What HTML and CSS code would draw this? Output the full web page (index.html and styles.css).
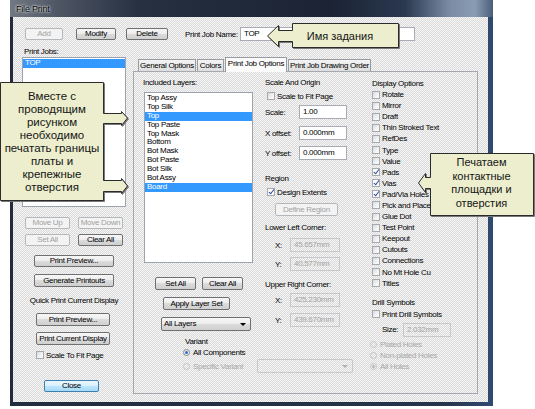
FILE: index.html
```html
<!DOCTYPE html>
<html lang="ru">
<head>
    <meta charset="UTF-8">
    <meta name="viewport" content="width=device-width, initial-scale=1.0">
    <title>File Print</title>
    <link rel="stylesheet" href="styles.css">
</head>
<body>
    <div class="window">
        <div class="titlebar">File Print</div>
        <div class="dialog">
            <div class="toolbar">
                <div class="btn off w-add">Add</div>
                <div class="btn w-modify">Modify</div>
                <div class="btn w-delete">Delete</div>
                <span class="job-label">Print Job Name:</span>
                <div class="field job-name">TOP</div>
            </div>
            <div class="main">
                <div class="jobs">
                    <div class="lbl jobs-title">Print Jobs:</div>
                    <div class="listbox jobs-list">
                        <div class="item sel">TOP</div>
                    </div>
                    <div class="pair move">
                        <div class="btn off">Move Up</div>
                        <div class="btn off">Move Down</div>
                    </div>
                    <div class="pair setall">
                        <div class="btn off">Set All</div>
                        <div class="btn">Clear All</div>
                    </div>
                    <div class="btn preview">Print Preview...</div>
                    <div class="btn generate">Generate Printouts</div>
                    <div class="lbl quick">Quick Print Current Display</div>
                    <div class="btn quick-btn first">Print Preview...</div>
                    <div class="btn quick-btn second">Print Current Display</div>
                    <div class="check fit"><span class="box"></span>Scale To Fit Page</div>
                    <div class="btn close">Close</div>
                </div>

                <div class="tabs-area">
                    <div class="tabs">
                        <div class="tab t-general">General Options</div>
                        <div class="tab t-colors">Colors</div>
                        <div class="tab active t-options">Print Job Options</div>
                        <div class="tab t-order">Print Job Drawing Order</div>
                    </div>
                    <div class="panel">
                        <!-- слои -->
                        <div class="col layers">
                            <div class="lbl">Included Layers:</div>
                            <div class="listbox layer-list">
                                <div class="item">Top Assy</div>
                                <div class="item">Top Silk</div>
                                <div class="item sel">Top</div>
                                <div class="item">Top Paste</div>
                                <div class="item">Top Mask</div>
                                <div class="item">Bottom</div>
                                <div class="item">Bot Mask</div>
                                <div class="item">Bot Paste</div>
                                <div class="item">Bot Silk</div>
                                <div class="item">Bot Assy</div>
                                <div class="item sel">Board</div>
                            </div>
                            <div class="pair layer-btns">
                                <div class="btn">Set All</div>
                                <div class="btn">Clear All</div>
                            </div>
                            <div class="btn apply">Apply Layer Set</div>
                            <div class="combo layer-combo">All Layers<span class="arrow"></span></div>
                            <div class="lbl variant-title">Variant</div>
                            <div class="check radio-row variant-all"><span class="radio on"></span>All Components</div>
                            <div class="check radio-row variant-spec off">
                                <span class="radio"></span><span class="spec-text">Specific Variant</span>
                                <div class="combo off spec-combo"><span class="arrow"></span></div>
                            </div>
                        </div>

                        <!-- масштаб и начало координат -->
                        <div class="col origin">
                            <div class="lbl">Scale And Origin</div>
                            <div class="check shift fit-page"><span class="box"></span>Scale to Fit Page</div>
                            <div class="row scale"><span class="name">Scale:</span><div class="field wide">1.00</div></div>
                            <div class="row xoff"><span class="name">X offset:</span><div class="field wide">0.000mm</div></div>
                            <div class="row yoff"><span class="name">Y offset:</span><div class="field wide">0.000mm</div></div>
                            <div class="lbl region">Region</div>
                            <div class="check shift extents"><span class="box on"></span>Design Extents</div>
                            <div class="btn off define">Define Region</div>
                            <div class="lbl lower">Lower Left Corner:</div>
                            <div class="row corner c1"><span class="axis">X:</span><div class="field off">45.657mm</div></div>
                            <div class="row corner c2"><span class="axis">Y:</span><div class="field off">40.577mm</div></div>
                            <div class="lbl upper">Upper Right Corner:</div>
                            <div class="row corner c3"><span class="axis">X:</span><div class="field off">425.230mm</div></div>
                            <div class="row corner c4"><span class="axis">Y:</span><div class="field off">439.670mm</div></div>
                        </div>

                        <!-- параметры отображения -->
                        <div class="col display">
                            <div class="lbl display-title">Display Options</div>
                            <div class="check"><span class="box"></span>Rotate</div>
                            <div class="check"><span class="box"></span>Mirror</div>
                            <div class="check"><span class="box"></span>Draft</div>
                            <div class="check"><span class="box"></span>Thin Stroked Text</div>
                            <div class="check"><span class="box"></span>RefDes</div>
                            <div class="check"><span class="box"></span>Type</div>
                            <div class="check"><span class="box"></span>Value</div>
                            <div class="check"><span class="box on"></span>Pads</div>
                            <div class="check"><span class="box on"></span>Vias</div>
                            <div class="check"><span class="box on"></span>Pad/Via Holes</div>
                            <div class="check"><span class="box"></span>Pick and Place</div>
                            <div class="check"><span class="box"></span>Glue Dot</div>
                            <div class="check"><span class="box"></span>Test Point</div>
                            <div class="check"><span class="box"></span>Keepout</div>
                            <div class="check"><span class="box"></span>Cutouts</div>
                            <div class="check"><span class="box"></span>Connections</div>
                            <div class="check"><span class="box"></span>No Mt Hole Cu</div>
                            <div class="check"><span class="box"></span>Titles</div>
                            <div class="lbl drill-title">Drill Symbols</div>
                            <div class="check drill"><span class="box"></span>Print Drill Symbols</div>
                            <div class="row size"><span class="name">Size:</span><div class="field off">2.032mm</div></div>
                            <div class="check radio-row off holes first"><span class="radio"></span>Plated Holes</div>
                            <div class="check radio-row off holes"><span class="radio"></span>Non-plated Holes</div>
                            <div class="check radio-row off holes"><span class="radio on"></span>All Holes</div>
                        </div>
                    </div>
                </div>
            </div>
        </div>
    </div>

    <svg class="callouts" width="535" height="409" viewBox="0 0 535 409">
        <path class="shape" d="M292.5 23.5H398.5V47.5H292.5V41.5H278.5V46.5L267.5 36L278.5 25.5V30.5H292.5Z"/>
        <path class="shape" d="M0.5 82.5H103.5V113.5H121.5V111.5L127.5 118L121.5 125.5V123.5H103.5V180.5H121.5V178.5L127.5 186L121.5 193.5V191.5H103.5V200.5H0.5Z"/>
        <path class="shape" d="M430.5 153.5H533.5V215.5H430.5V188.5H425.5V192.5L418.5 183L425.5 173.5V177.5H430.5Z"/>
    </svg>
    <div class="note note-name">Имя задания</div>
    <div class="note note-board">Вместе с<br>проводящим<br>рисунком<br>необходимо<br>печатать границы<br>платы и<br>крепежные<br>отверстия</div>
    <div class="note note-pads">Печатаем<br>контактные<br>площадки и<br>отверстия</div>
</body>
</html>
```

FILE: styles.css
```css
html, body {
    margin: 0;
    padding: 0;
}
body {
    width: 535px;
    height: 409px;
    position: relative;
    overflow: hidden;
    background: #fff;
    font-family: 'Liberation Sans', Arial, sans-serif;
    font-size: 8px;
    letter-spacing: -0.3px;
    color: #000;
}

/* окно */
.window {
    margin-left: 10px;
    width: 483px;
    height: 406px;
    background: linear-gradient(90deg, #222c3e, #26334a 90%, #2f4a72);
    display: flex;
    flex-direction: column;
}
.titlebar {
    height: 17px;
    box-sizing: border-box;
    padding: 3px 0 0 6px;
    font-size: 9px;
    line-height: 12px;
    letter-spacing: -0.2px;
    color: #000;
    text-shadow: 0 0 3px #dfe4ea, 0 0 2px #fff;
    background: linear-gradient(90deg, #737982 0, #4d5563 50px, #263041 130px, #1b2334 320px, #2a3850 395px, #7b8ca4 440px, #8a9cb4 465px, #4a5e7a 483px);
}
.dialog {
    flex: 1;
    margin: 0 5px 4px 3px;
    background-color: #e7e7e7;
    background-image: repeating-conic-gradient(#dadada 0 25%, #f6f6f6 0 50%);
    background-size: 2px 2px;
}

/* кнопки и поля */
.btn {
    height: 12px;
    box-sizing: border-box;
    border: 1px solid #707070;
    border-radius: 2px;
    background: linear-gradient(#f7f7f7, #ececec 50%, #dcdcdc 50%, #cfcfcf);
    text-align: center;
    line-height: 10px;
    white-space: nowrap;
}
.btn.off {
    border-color: #b4b8bb;
    background: #f3f3f3;
    color: #a2a2a2;
}
.field {
    height: 14px;
    box-sizing: border-box;
    border: 1px solid #a9acb4;
    background: #fff;
    line-height: 12px;
    padding-left: 3px;
    white-space: nowrap;
}
.field.off {
    background: transparent;
    border-color: #c6c8cc;
    color: #a4a4a4;
}
.combo {
    height: 14px;
    box-sizing: border-box;
    border: 1px solid #707070;
    border-radius: 2px;
    background: linear-gradient(#f7f7f7, #ececec 50%, #dcdcdc 50%, #cfcfcf);
    display: flex;
    align-items: center;
    padding: 0 4px 0 2px;
    line-height: 12px;
}
.combo .arrow {
    margin-left: auto;
    border-left: 3px solid transparent;
    border-right: 3px solid transparent;
    border-top: 3px solid #000;
}
.combo.off {
    background: transparent;
    border-color: #c6c8cc;
}
.combo.off .arrow {
    border-top-color: #b0b0b0;
}
.lbl {
    line-height: 10px;
    height: 10px;
    white-space: nowrap;
}
.listbox {
    box-sizing: border-box;
    border: 1px solid #9ca3ae;
    background: #fff;
    padding-top: 1px;
}
.item {
    height: 8.9px;
    line-height: 8.9px;
    padding-left: 2px;
    white-space: nowrap;
}
.item.sel {
    background: #3399ff;
    color: #fff;
}
.check {
    display: flex;
    align-items: center;
    height: 11.1px;
    white-space: nowrap;
}
.box {
    width: 8px;
    height: 8px;
    box-sizing: border-box;
    border: 1px solid #a6a9ad;
    background: linear-gradient(135deg, #d9dadc, #f7f7f7 70%);
    margin-right: 2px;
    position: relative;
    flex: none;
}
.box.on {
    background: #fbfbfb;
}
.box.on::after {
    content: "";
    position: absolute;
    left: 2px;
    top: -1px;
    width: 2px;
    height: 5px;
    border: solid #2a4aa0;
    border-width: 0 1.2px 1.2px 0;
    transform: rotate(38deg);
}
.radio {
    width: 7px;
    height: 7px;
    box-sizing: border-box;
    border: 1px solid #8a8c8e;
    border-radius: 50%;
    background: #ececec;
    margin-right: 3px;
    position: relative;
    flex: none;
}
.radio.on::after {
    content: "";
    position: absolute;
    left: 1px;
    top: 1px;
    width: 3px;
    height: 3px;
    border-radius: 50%;
    background: #2c6fd4;
}
.off .radio {
    border-color: #c4c6c8;
    background: transparent;
}
.off .radio.on::after {
    background: #b8bcc4;
}
.check.off {
    color: #a8a8a8;
}
.row {
    display: flex;
    align-items: center;
    height: 14px;
    white-space: nowrap;
}

/* верхняя строка */
.toolbar {
    display: flex;
    align-items: center;
    height: 14px;
    margin-top: 10px;
    padding-left: 12px;
}
.w-add { width: 38px; }
.w-modify { width: 40px; margin-left: 13px; }
.w-delete { width: 42px; margin-left: 10px; }
.job-label {
    width: 55px;
    margin-left: 17px;
}
.job-name {
    width: 175px;
}

.main {
    display: flex;
    margin-top: 6px;
}

/* левая колонка */
.jobs {
    width: 104px;
    margin-left: 9px;
}
.jobs-title {
    padding-left: 2px;
}
.jobs-list {
    height: 150px;
}
.pair {
    display: flex;
    gap: 8px;
}
.pair.move, .pair.setall {
    margin-left: 3px;
}
.pair.move .btn, .pair.setall .btn {
    width: 45px;
}
.pair.move { margin-top: 10px; }
.pair.setall { margin-top: 5px; }
.preview {
    width: 80px;
    margin: 9px 0 0 12px;
}
.generate {
    width: 80px;
    height: 13px;
    line-height: 11px;
    margin: 7px 0 0 12px;
}
.quick {
    margin-top: 9px;
    text-align: center;
}
.quick-btn {
    width: 74px;
    height: 13px;
    line-height: 11px;
    margin-left: 14px;
}
.quick-btn.first { margin-top: 7px; }
.quick-btn.second { margin-top: 6px; }
.fit {
    height: 10px;
    margin: 5px 0 0 14px;
}
.close {
    width: 55px;
    margin: 20px 0 0 22px;
    border-color: #3c7fb1;
    background: linear-gradient(#eaf6fd, #d9f0fc 50%, #bee6fd 50%, #a7d9f5);
}

/* вкладки */
.tabs-area {
    width: 345px;
    margin-left: 7px;
}
.tabs {
    display: flex;
    align-items: flex-end;
    height: 14px;
    margin-top: 10px;
    padding-left: 5px;
}
.tab {
    height: 12px;
    box-sizing: border-box;
    border: 1px solid #989ba0;
    border-bottom: none;
    background: linear-gradient(#f4f4f4, #dedede);
    line-height: 11px;
    text-align: center;
    white-space: nowrap;
    margin-right: 1px;
}
.tab.active {
    height: 15px;
    margin-bottom: -1px;
    background: #fbfbfb;
    position: relative;
    z-index: 1;
    line-height: 12px;
}
.t-general { width: 58px; }
.t-colors { width: 27px; }
.t-options { width: 62px; }
.t-order { width: 83px; }
.panel {
    height: 323px;
    box-sizing: border-box;
    border: 1px solid #a5a8ae;
    padding: 6px 0 0 9px;
    display: grid;
    grid-template-columns: 110px 95px 96px;
    column-gap: 12px;
    align-items: start;
}

/* колонка слоёв */
.layer-list {
    height: 171px;
    margin: 4px 0 0 1px;
}
.layer-btns {
    margin: 14px 0 0 12px;
    gap: 6px;
}
.layer-btns .btn {
    width: 41px;
    height: 13px;
    line-height: 11px;
}
.apply {
    width: 67px;
    height: 13px;
    line-height: 11px;
    margin: 7px 0 0 20px;
}
.layer-combo {
    width: 90px;
    margin: 7px 0 0 18px;
}
.variant-title {
    margin: 6px 0 0 42px;
}
.radio-row {
    height: 10px;
}
.variant-all {
    margin-left: 40px;
}
.variant-spec {
    height: 14px;
    width: 170px;
    margin: 2px 0 0 40px;
}
.spec-text {
    width: 52px;
    flex: none;
}
.spec-combo {
    width: 96px;
    flex: none;
    margin-left: 12px;
}

/* колонка масштаба */
.origin .shift {
    margin-left: 2px;
}
.fit-page {
    height: 10px;
    margin-top: 3px;
}
.origin .name {
    width: 34px;
}
.field.wide {
    width: 48px;
}
.scale { margin-top: 4px; }
.xoff { margin-top: 7px; }
.yoff { margin-top: 6px; }
.region { margin-top: 14px; }
.extents {
    height: 10px;
    margin-top: 3px;
}
.define {
    width: 63px;
    height: 13px;
    line-height: 11px;
    margin: 6px 0 0 10px;
}
.lower { margin-top: 7px; }
.corner .axis {
    width: 15px;
    margin-left: 10px;
}
.corner .field {
    width: 50px;
}
.c1, .c2 { margin-top: 5px; }
.upper { margin-top: 9px; }
.c3 { margin-top: 3px; }
.c4 { margin-top: 6px; }

/* колонка отображения */
.display-title {
    margin-top: 1px;
}
.drill-title {
    margin-top: 9px;
}
.drill {
    margin-top: 1px;
}
.size {
    margin-top: 3px;
}
.size .name {
    width: 21px;
    margin-left: 10px;
}
.size .field {
    width: 48px;
}
.holes {
    height: 11px;
    margin-left: -2px;
}
.holes.first {
    margin-top: 2px;
}

/* выноски */
.callouts {
    position: absolute;
    left: 0;
    top: 0;
    pointer-events: none;
}
.shape {
    fill: #eceecd;
    stroke: #2b2b2b;
    stroke-width: 1;
    filter: drop-shadow(1px 1px 0 #7a7a7a);
}
.note {
    position: absolute;
    text-align: center;
    font-size: 11px;
    letter-spacing: 0;
    color: #151515;
    white-space: nowrap;
}
.note-name {
    left: 292px;
    top: 29px;
    width: 96px;
    line-height: 14px;
}
.note-board {
    left: 0;
    top: 90px;
    width: 104px;
    font-size: 11.5px;
    line-height: 13px;
}
.note-pads {
    left: 430px;
    top: 156px;
    width: 103px;
    line-height: 13.7px;
}
```
